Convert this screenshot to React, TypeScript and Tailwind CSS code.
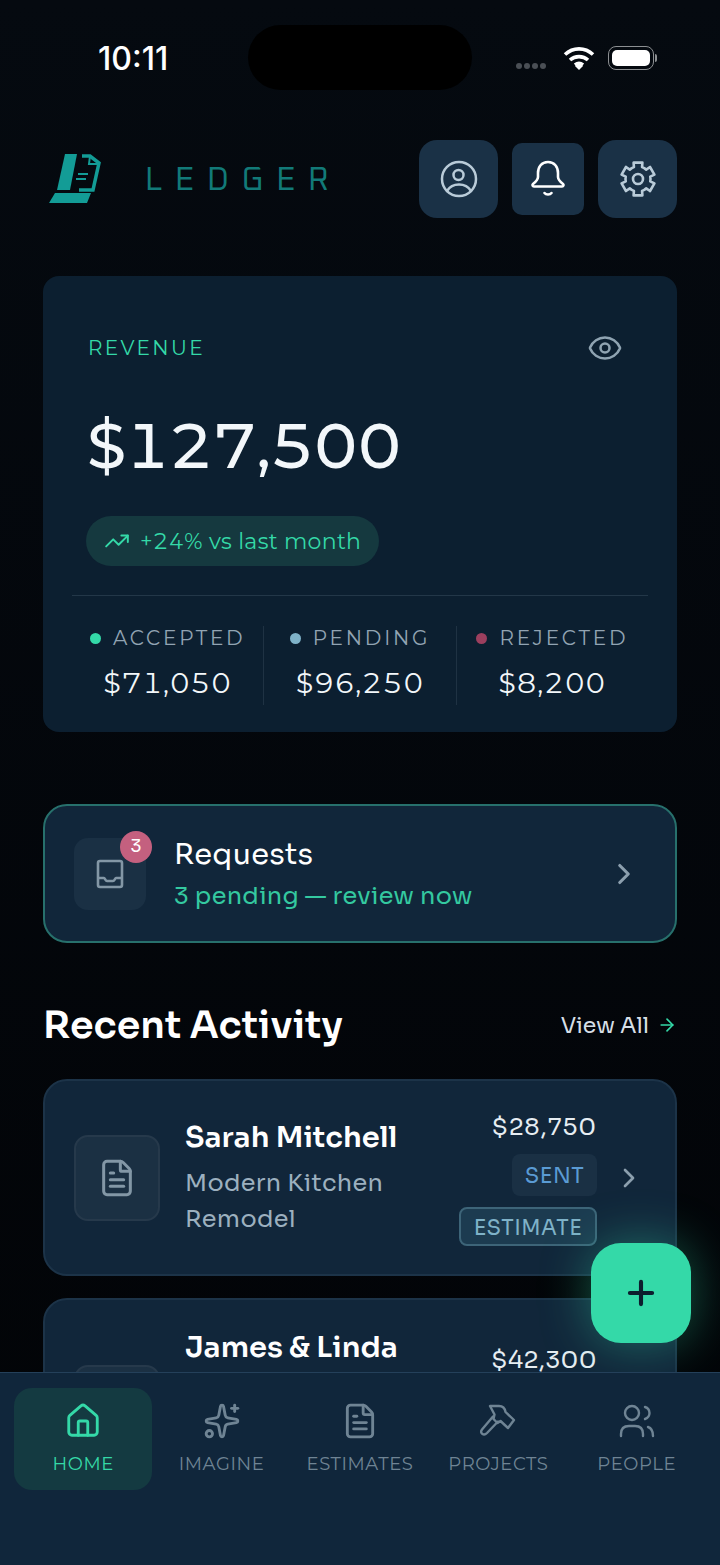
import { ArrowRight, ChevronRight, Eye, FileText, House, Plus, Sparkles, TrendingUp } from "lucide-react";

const wide = "font-['Montserrat','Inter',sans-serif] tabular-nums";
const sora = "font-['Sora','Inter',sans-serif]";

const stats = [
  { label: "ACCEPTED", value: "$71,050", dot: "bg-[#34d9a8]" },
  { label: "PENDING", value: "$96,250", dot: "bg-[#7fb2c8]" },
  { label: "REJECTED", value: "$8,200", dot: "bg-[#9c3f5e]" },
];

function HammerIcon() {
  return (
    <svg width="38" height="38" viewBox="0 0 38 38" fill="none" stroke="currentColor" strokeWidth="2.400" strokeLinejoin="round" strokeLinecap="round">
      <path d="M11 4h9c4 0 6 3 6.500 6l8.500 8-6 8-7.500-7-3 2-4-4 1-4.500-4.500-8.500z" />
      <path d="M14 14.500 3 27.500c-1.500 2-1 3.500.5 4.500s3 .5 4.500-1L19 19.500" />
    </svg>
  );
}

function PeopleIcon() {
  return (
    <svg width="38" height="38" viewBox="0 0 38 38" fill="none" stroke="currentColor" strokeWidth="2.400" strokeLinecap="round">
      <circle cx="14" cy="11" r="7" />
      <path d="M27 5c3 1 4.500 3.500 4.500 6s-1.500 5-4.500 6" />
      <path d="M3 34v-2c0-5 3-8 8-8h6c5 0 8 3 8 8v2" />
      <path d="M30 25c3 1 5 3.500 5 9" />
    </svg>
  );
}

const navItems: { label: string; icon: React.ComponentType<{ size?: number; strokeWidth?: number }>; active?: boolean }[] = [
  { label: "HOME", icon: House, active: true },
  { label: "IMAGINE", icon: Sparkles },
  { label: "ESTIMATES", icon: FileText },
  { label: "PROJECTS", icon: HammerIcon },
  { label: "PEOPLE", icon: PeopleIcon },
];

function LogoMark() {
  return (
    <svg width="52" height="52" viewBox="0 0 52 52" fill="none">
      <path d="M16 1h12l-7 36H8z" fill="#139c96" />
      <path d="M6 40h36l-4 10H0z" fill="#139c96" />
      <path d="M33 3h8l9 7-6 27H30" stroke="#139c96" strokeWidth="3.500" />
      <path d="M41 3l-1 8h10" stroke="#139c96" strokeWidth="2" />
      <path d="M29 21h10M27 26h10" stroke="#139c96" strokeWidth="2" />
    </svg>
  );
}

function UserIcon() {
  return (
    <svg width="40" height="40" viewBox="0 0 40 40" fill="none" stroke="currentColor" strokeWidth="2.500" strokeLinecap="round">
      <circle cx="20" cy="20" r="17" />
      <circle cx="19.500" cy="16" r="5" />
      <path d="M8 32c3-5 8-6.500 12-6.500s9 1.500 12 6.500" />
    </svg>
  );
}

function BellIcon() {
  return (
    <svg width="36" height="40" viewBox="0 0 36 40" fill="none" stroke="white" strokeWidth="2.600" strokeLinecap="round" strokeLinejoin="round">
      <path d="M18 3c-6.500 0-10 5-10 11v4c0 3-2.500 5-5 7-1 1-.5 2.500 1 2.500h28c1.500 0 2-1.500 1-2.500-2.500-2-5-4-5-7v-4c0-6-3.500-11-10-11z" />
      <path d="M14.500 34c1.500 2 5.500 2 7 0" />
    </svg>
  );
}

// six chunky teeth around the hub
const cogPath = [0, 1, 2, 3, 4, 5]
  .map((i) => {
    const a = -90 + i * 60;
    return [[12.5, a - 30], [12.5, a - 19], [17, a - 15], [17, a + 15], [12.5, a + 19]]
      .map(([r, d]) => `${(20 + r * Math.cos((d * Math.PI) / 180)).toFixed(2)} ${(20 + r * Math.sin((d * Math.PI) / 180)).toFixed(2)}`)
      .join(" L");
  })
  .join(" L");

function CogIcon() {
  return (
    <svg width="40" height="40" viewBox="0 0 40 40" fill="none" stroke="currentColor" strokeWidth="2.600" strokeLinejoin="round">
      <path d={`M${cogPath}z`} />
      <circle cx="20" cy="20" r="5" />
    </svg>
  );
}

function HeaderButton({ children, small }: { children: React.ReactNode; small?: boolean }) {
  return (
    <div className={`flex items-center justify-center bg-[#1a3146] text-[#b9cbd8] ${small ? "w-[72px] h-[72px] rounded-[10px]" : "w-[79px] h-[78px] rounded-[18px]"}`}>
      {children}
    </div>
  );
}

export default function App() {
  return (
    <div className={`relative w-[720px] h-[1565px] overflow-hidden bg-gradient-to-b from-[#050a10] to-[#020407] text-white ${sora}`}>
      {/* status bar */}
      <div className="relative h-[140px] font-['Inter',sans-serif]">
        <div className="absolute left-[98px] top-[40px] text-[32px] leading-[38px] font-medium">10:11</div>
        <div className="absolute left-[248px] top-[25px] w-[224px] h-[65px] rounded-[33px] bg-black" />
        <div className="absolute left-[516px] top-[63px] flex gap-[2px]">
          {[0, 1, 2, 3].map((i) => (
            <span key={i} className="w-[6px] h-[6px] rounded-full bg-[#4a4f55]" />
          ))}
        </div>
        <svg className="absolute left-[563px] top-[46px]" width="32" height="24" viewBox="0 0 32 24" fill="none" stroke="white" strokeWidth="3.6">
          <path d="M2 8.5c8-7.5 20-7.500 28 0" />
          <path d="M7 14c5-4.500 13-4.500 18 0" />
          <path d="M12 19c2.500-2 5.500-2 8 0" />
          <path d="M16 24l-4-4c2-2 6-2 8 0z" fill="white" stroke="none" />
        </svg>
        <div className="absolute left-[608px] top-[46px] flex items-center gap-[1px]">
          <div className="w-[46px] h-[24px] rounded-[8px] border border-[#8c8f92] p-[3px]">
            <div className="w-full h-full rounded-[5px] bg-white" />
          </div>
          <div className="w-[2px] h-[8px] rounded-r bg-[#8c8f92]" />
        </div>
      </div>

      {/* header */}
      <header className="flex items-center justify-between h-[78px] pl-[49px] pr-[43px]">
        <div className="flex items-center">
          <LogoMark />
          <span className="ml-[44px] pt-[4px] text-[32px] font-normal tracking-[13px] text-[#127a78] font-['Oxanium','Roboto',sans-serif]">LEDGER</span>
        </div>
        <div className="flex items-center gap-[14px]">
          <HeaderButton>
            <UserIcon />
          </HeaderButton>
          <HeaderButton small>
            <BellIcon />
          </HeaderButton>
          <HeaderButton>
            <CogIcon />
          </HeaderButton>
        </div>
      </header>

      <main className="mt-[58px] px-[43px]">
        {/* revenue */}
        <section className={`h-[456px] rounded-[16px] bg-[#0c1f30] pt-[54px] ${wide}`}>
          <div className="flex items-center justify-between pl-[45px] pr-[54px]">
            <span className="text-[20px] leading-[28px] tracking-[2.4px] text-[#34d9a8]">REVENUE</span>
            <Eye size={36} strokeWidth={1.7} className="text-[#8fa3b1]" />
          </div>
          <div className="mt-[40px] pl-[44px] text-[63px] leading-[80px] tracking-[-0.5px] font-medium text-[#f3f7fa]">$127,500</div>
          <div className="ml-[43px] mt-[30px] inline-flex h-[50px] items-center gap-[10px] rounded-full bg-[#15393f] pl-[18px] pr-[18px] text-[22px] tracking-[0.3px] text-[#34d9a8]">
            <TrendingUp size={26} strokeWidth={1.8} />
            +24% vs last month
          </div>
          <div className="mx-[29px] mt-[29px] border-t border-[#233748]" />
          <div className="mt-[30px] flex px-[29px]">
            {stats.map((s, i) => (
              <div key={s.label} className={`flex-1 h-[79px] flex flex-col items-center ${i > 0 ? "border-l border-[#1f3243]" : ""}`}>
                <div className="flex items-center gap-[12px] text-[20px] leading-[24px] tracking-[2.8px] text-[#92a4b3]">
                  <span className={`w-[11px] h-[11px] rounded-full ${s.dot}`} />
                  {s.label}
                </div>
                <div className="mt-[15px] text-[28px] leading-[36px] tracking-[1px] text-[#f3f7fa]">{s.value}</div>
              </div>
            ))}
          </div>
        </section>

        {/* requests */}
        <section className="mt-[72px] h-[139px] flex items-center rounded-[24px] border-2 border-[#27706c] bg-[#11263a] pl-[29px] pr-[34px]">
          <div className="relative w-[72px] h-[72px] rounded-[14px] bg-[#1a3044] flex items-center justify-center text-[#8397a6]">
            <svg width="30" height="30" viewBox="0 0 30 30" fill="none" stroke="currentColor" strokeWidth="2.600" strokeLinejoin="round">
              <rect x="3" y="2" width="24" height="26" rx="2" />
              <path d="M3 19h6c1 0 1.500 3 3 3h6c1.500 0 2-3 3-3h6" />
            </svg>
            <span className="absolute -right-[6px] -top-[7px] w-[32px] h-[32px] rounded-full bg-[#c4607f] flex items-center justify-center text-[18px] font-medium text-white">3</span>
          </div>
          <div className="ml-[28px] flex-1">
            <div className="text-[29px] leading-[38px] font-medium tracking-[0.3px] text-white">Requests</div>
            <div className="mt-[6px] text-[24px] leading-[34px] tracking-[0.3px] text-[#34c9a0]">3 pending — review now</div>
          </div>
          <ChevronRight size={34} strokeWidth={2.2} className="text-[#8c9fae]" />
        </section>

        {/* recent activity */}
        <div className="mt-[55px] flex items-center justify-between">
          <h2 className="text-[38px] leading-[54px] font-semibold text-white">Recent Activity</h2>
          <div className="flex items-center gap-[8px] text-[22px] font-medium text-[#d6dfe6]">
            View All
            <ArrowRight size={20} strokeWidth={2} className="text-[#34d9a8]" />
          </div>
        </div>

        <article className="mt-[27px] h-[197px] flex items-center rounded-[24px] border-2 border-[#1c3348] bg-[#11263a] pl-[29px] pr-[30px]">
          <div className="w-[86px] h-[86px] rounded-[14px] border-2 border-[#26394b] bg-[#1b3043] flex items-center justify-center text-[#8397a6]">
            <FileText size={40} strokeWidth={1.8} />
          </div>
          <div className="ml-[25px] flex-1">
            <div className="text-[29px] leading-[38px] font-semibold text-white">Sarah Mitchell</div>
            <div className="mt-[9px] text-[24px] leading-[36px] tracking-[0.3px] text-[#9cb0bf]">Modern Kitchen<br />Remodel</div>
          </div>
          <div className="flex flex-col items-end pt-[2px]">
            <div className="text-[24px] leading-[32px] tracking-[0.9px] text-[#e6edf2]">$28,750</div>
            <div className="mt-[11px] h-[42px] w-[85px] rounded-[8px] bg-[#1a3044] pt-[3px] flex items-center justify-center text-[21px] font-medium tracking-[0.5px] text-[#5a9bd4]">SENT</div>
            <div className="mt-[11px] h-[39px] w-[138px] rounded-[8px] border-2 border-[#3d6478] bg-[#1c3b50] pt-[5px] flex items-center justify-center text-[21px] font-medium tracking-[0.5px] text-[#7fb2c8]">ESTIMATE</div>
          </div>
          <ChevronRight size={32} strokeWidth={2} className="ml-[16px] text-[#8c9fae]" />
        </article>

        <article className="mt-[22px] h-[200px] flex rounded-t-[24px] border-2 border-[#1c3348] bg-[#11263a] pl-[29px] pr-[78px]">
          <div className="mt-[65px] w-[86px] h-[86px] rounded-[14px] border-2 border-[#26394b] bg-[#1b3043]" />
          <div className="ml-[25px] mt-[28px] flex-1 text-[29px] leading-[38px] font-semibold text-white">James &amp; Linda</div>
          <div className="mt-[45px] text-[24px] leading-[30px] tracking-[0.4px] text-[#e6edf2]">$42,300</div>
        </article>
      </main>

      {/* floating add button */}
      <div className="absolute left-[591px] top-[1243px] z-10 w-[100px] h-[100px] rounded-[30px] bg-[#34d9a8] shadow-[0_0_50px_rgba(52,217,168,0.4)] flex items-center justify-center text-[#0c1e2e]">
        <Plus size={38} strokeWidth={2.600} />
      </div>

      {/* tab bar */}
      <nav className={`absolute inset-x-0 bottom-0 z-20 h-[193px] border-t border-[#24405a] bg-[#10263b] px-[14px] pt-[15px] ${wide}`}>
        <div className="grid grid-cols-5">
          {navItems.map((item) => {
            const Icon = item.icon;
            return (
              <div key={item.label} className={`h-[102px] rounded-[18px] flex flex-col items-center pt-[14px] ${item.active ? "bg-[#143a41] text-[#34d9a8]" : "text-[#6f8494]"}`}>
                <Icon size={38} strokeWidth={1.8} />
                <span className="mt-[12px] text-[18px] leading-[24px] tracking-[0.6px] whitespace-nowrap">{item.label}</span>
              </div>
            );
          })}
        </div>
      </nav>
    </div>
  );
}
